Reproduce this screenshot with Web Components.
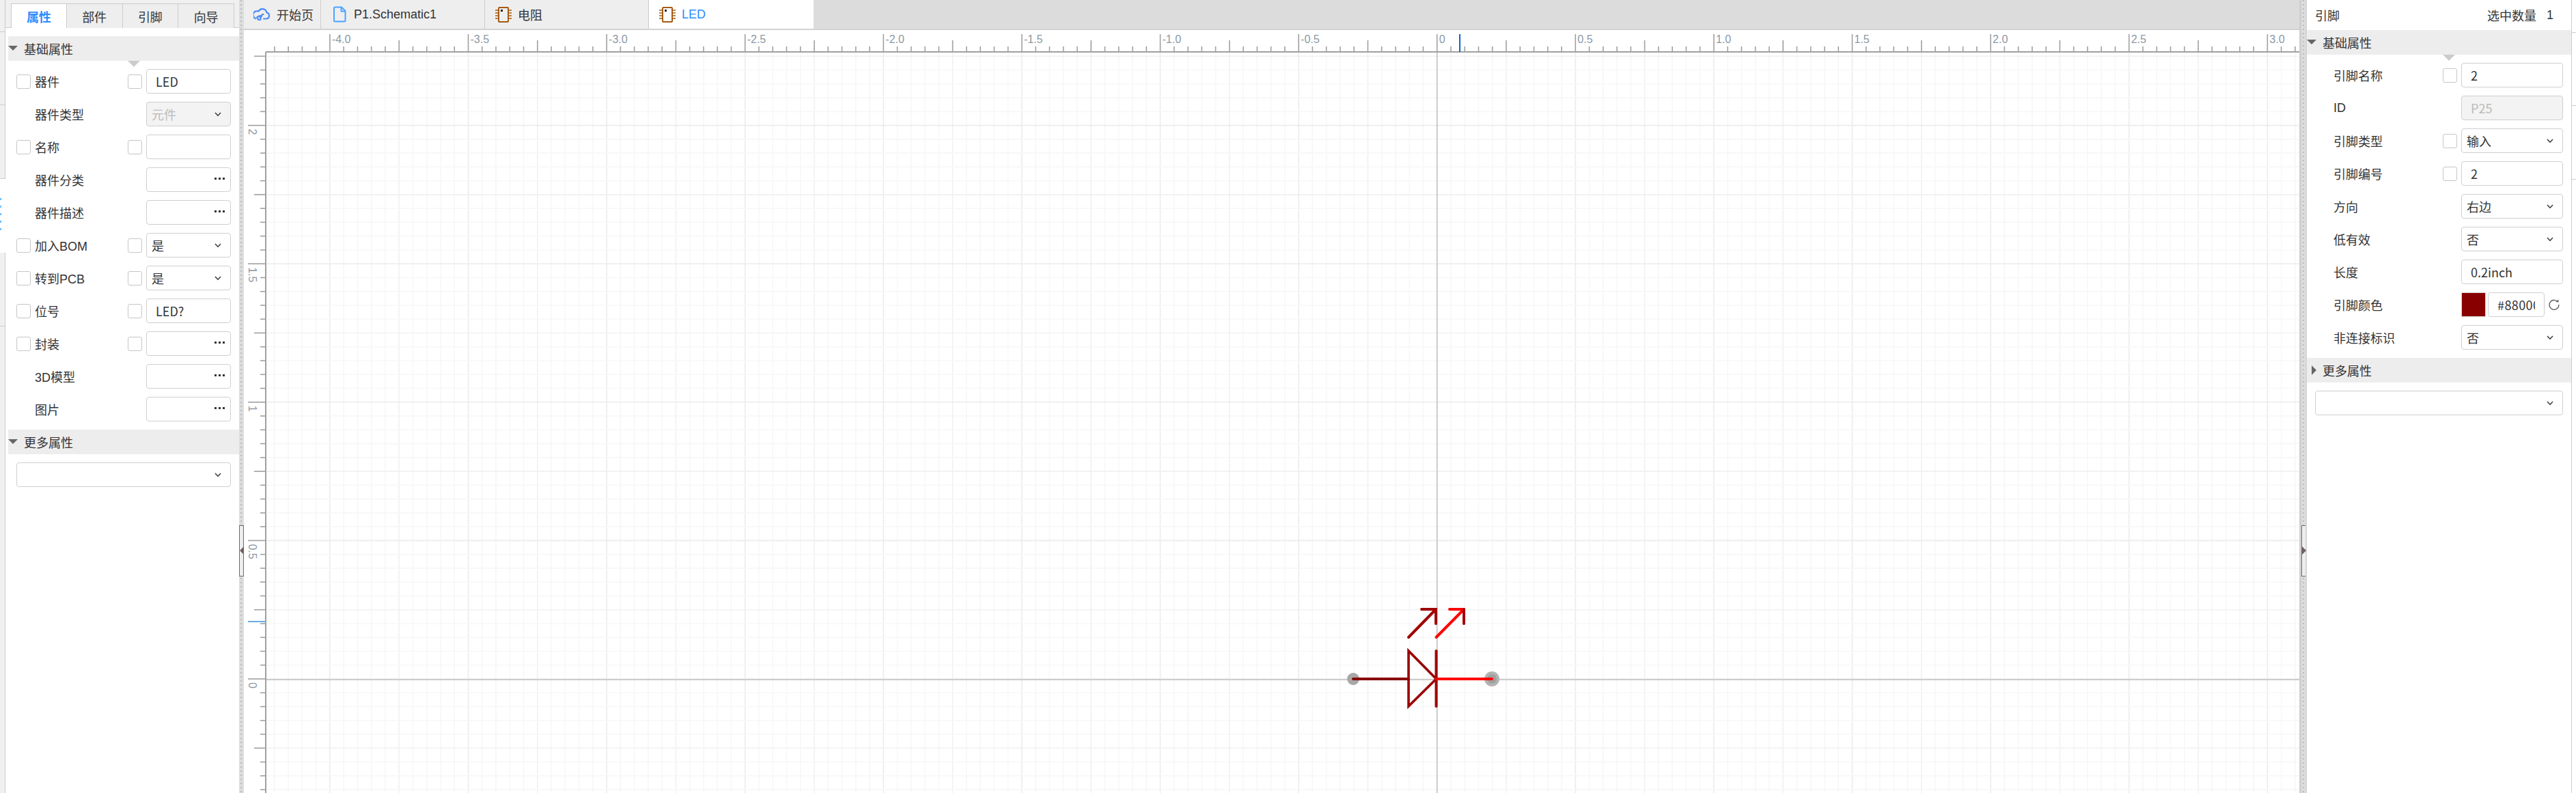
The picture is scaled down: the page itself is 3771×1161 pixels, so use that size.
<!DOCTYPE html>
<html lang="zh">
<head>
<meta charset="utf-8">
<title>LED</title>
<style>
  html, body { margin: 0; height: 100%; overflow: hidden; background: #fff; }
  body { font-family: "Liberation Sans", "Noto Sans CJK SC", sans-serif; font-size: 18px; color: #333; }
</style>
</head>
<body>
<editor-app>
  <edge-strip slot="left-edge"></edge-strip>
  <prop-panel slot="left" style="--panel-w:342px;--body-left:4px;--field-w:124px">
    <side-tabs slot="head">
      <side-tab active>属性</side-tab>
      <side-tab>部件</side-tab>
      <side-tab>引脚</side-tab>
      <side-tab>向导</side-tab>
    </side-tabs>
    <prop-section title="基础属性" open notch="175">
      <prop-row label="器件" check check2><prop-field type="input" value="LED"></prop-field></prop-row>
      <prop-row label="器件类型"><prop-field type="select" value="元件" disabled></prop-field></prop-row>
      <prop-row label="名称" check check2><prop-field type="input"></prop-field></prop-row>
      <prop-row label="器件分类"><prop-field type="dots"></prop-field></prop-row>
      <prop-row label="器件描述"><prop-field type="dots"></prop-field></prop-row>
      <prop-row label="加入BOM" check check2><prop-field type="select" value="是"></prop-field></prop-row>
      <prop-row label="转到PCB" check check2><prop-field type="select" value="是"></prop-field></prop-row>
      <prop-row label="位号" check check2><prop-field type="input" value="LED?"></prop-field></prop-row>
      <prop-row label="封装" check check2><prop-field type="dots"></prop-field></prop-row>
      <prop-row label="3D模型"><prop-field type="dots"></prop-field></prop-row>
      <prop-row label="图片"><prop-field type="dots"></prop-field></prop-row>
    </prop-section>
    <prop-section title="更多属性" open>
      <prop-row wide><prop-field type="select"></prop-field></prop-row>
    </prop-section>
  </prop-panel>
  <split-bar slot="left-split" dir="left"></split-bar>

  <doc-tabs slot="tabs">
    <doc-tab width="113" pad="14" gap="9" icon="cloud">开始页</doc-tab>
    <doc-tab width="240" pad="18" gap="11" icon="file">P1.Schematic1</doc-tab>
    <doc-tab width="240" pad="15" gap="9" icon="chip">电阻</doc-tab>
    <doc-tab width="241" pad="15" gap="9" icon="chip" active>LED</doc-tab>
  </doc-tabs>
  <sch-canvas slot="canvas"></sch-canvas>

  <split-bar slot="right-split" dir="right"></split-bar>
  <prop-panel slot="right" style="--panel-w:387px;--field-w:149px">
    <pin-head slot="head" name="引脚" count="1"></pin-head>
    <prop-section title="基础属性" open notch="199">
      <prop-row label="引脚名称" check2><prop-field type="input" value="2"></prop-field></prop-row>
      <prop-row label="ID"><prop-field type="input" value="P25" disabled></prop-field></prop-row>
      <prop-row label="引脚类型" check2><prop-field type="select" value="输入"></prop-field></prop-row>
      <prop-row label="引脚编号" check2><prop-field type="input" value="2"></prop-field></prop-row>
      <prop-row label="方向"><prop-field type="select" value="右边"></prop-field></prop-row>
      <prop-row label="低有效"><prop-field type="select" value="否"></prop-field></prop-row>
      <prop-row label="长度"><prop-field type="input" value="0.2inch"></prop-field></prop-row>
      <prop-row label="引脚颜色"><color-field value="#880000"></color-field></prop-row>
      <prop-row label="非连接标识"><prop-field type="select" value="否"></prop-field></prop-row>
    </prop-section>
    <prop-section title="更多属性">
      <prop-row wide><prop-field type="select"></prop-field></prop-row>
    </prop-section>
  </prop-panel>
  <edge-strip slot="right-edge" side="right"></edge-strip>
</editor-app>

<script>
const CJK = `"Noto Sans CJK SC", sans-serif`;
const chevron = `<svg width="10" height="7" viewBox="0 0 10 7"><path d="M1 1l4 4.2L9 1" fill="none" stroke="#333" stroke-width="1.4"/></svg>`;

class EditorApp extends HTMLElement {
  connectedCallback() {
    this.attachShadow({ mode: "open" }).innerHTML = `
      <style>
        :host { display: flex; width: 100%; height: 1161px; overflow: hidden; }
        .center { flex: 1; min-width: 0; display: flex; flex-direction: column; }
      </style>
      <slot name="left-edge"></slot>
      <slot name="left"></slot>
      <slot name="left-split"></slot>
      <div class="center">
        <slot name="tabs"></slot>
        <slot name="canvas"></slot>
      </div>
      <slot name="right-split"></slot>
      <slot name="right"></slot>
      <slot name="right-edge"></slot>
    `;
  }
}

class EdgeStrip extends HTMLElement {
  connectedCallback() {
    const right = this.getAttribute("side") === "right";
    this.attachShadow({ mode: "open" }).innerHTML = `
      <style>
        :host { display: flex; flex-direction: column; flex: none; width: ${right ? 7 : 8}px; height: 100%;
          box-sizing: border-box; ${right ? "border-left" : "border-right"}: 1px solid #ccc; background: ${right ? "#fff" : "#f0f0f0"}; }
        div { box-sizing: border-box; border-bottom: 1px solid #ccc; }
        .gap { background: #fff; border: 0; margin-right: -1px;
          background-image: repeating-linear-gradient(#6cbcff 0 3px, transparent 3px 11px);
          background-size: 2px 48px; background-repeat: no-repeat; background-position: 0 28px; }
      </style>
      <div style="height:${right ? 48 : 47}px"></div>
      <div style="height:107px"></div>
      <div style="height:108px"></div>
      ${right ? "" : `<div class="gap" style="height:108px"></div><div style="height:108px"></div>`}
    `;
  }
}

class PropPanel extends HTMLElement {
  connectedCallback() {
    this.attachShadow({ mode: "open" }).innerHTML = `
      <style>
        :host { display: flex; flex-direction: column; flex: none; width: var(--panel-w); height: 100%; background: #fff; }
        .body { padding-left: var(--body-left, 0); }
      </style>
      <slot name="head"></slot>
      <div class="body"><slot></slot></div>
    `;
  }
}

class SideTabs extends HTMLElement {
  connectedCallback() {
    this.attachShadow({ mode: "open" }).innerHTML = `
      <style>
        :host { display: flex; height: 41px; box-sizing: border-box; margin-bottom: 12px; padding: 5px 7px 0 8px; background: #f0f0f0; border-bottom: 1px solid #ccc; }
      </style>
      <slot></slot>
    `;
  }
}

class SideTab extends HTMLElement {
  connectedCallback() {
    this.attachShadow({ mode: "open" }).innerHTML = `
      <style>
        :host { display: flex; align-items: center; justify-content: center; width: 82px; height: 36px; box-sizing: border-box;
          background: #eee; border-top: 1px solid #ccc; border-right: 1px solid #ccc; color: #333; }
        :host([active]) { background: #fff; color: #2b8cff; font-weight: 700; border-left: 1px solid #ccc; }
      </style>
      <slot></slot>
    `;
  }
}

class PinHead extends HTMLElement {
  connectedCallback() {
    this.attachShadow({ mode: "open" }).innerHTML = `
      <style>
        :host { display: flex; align-items: center; height: 44px; padding: 0 26px 0 12px; }
        .name { flex: 1; }
        .count { margin-left: 15px; }
      </style>
      <span class="name">${this.getAttribute("name")}</span>
      <span>选中数量</span>
      <span class="count">${this.getAttribute("count")}</span>
    `;
  }
}

class PropSection extends HTMLElement {
  connectedCallback() {
    const notch = this.getAttribute("notch");
    this.attachShadow({ mode: "open" }).innerHTML = `
      <style>
        :host { display: block; position: relative; padding-bottom: 12px; }
        .head { display: flex; align-items: center; height: 36px; background: #ededed; padding-left: 23px; position: relative; }
        .arrow { position: absolute; left: 0; top: 14px; width: 0; height: 0;
          border-left: 7px solid transparent; border-right: 7px solid transparent; border-top: 7px solid #666; }
        :host(:not([open])) .arrow { left: 7px; top: 11px; border-top: 7px solid transparent; border-bottom: 7px solid transparent;
          border-left: 7px solid #666; border-right: 0; }
        .notch { position: absolute; top: 36px; left: ${notch}px; width: 0; height: 0;
          border-left: 9px solid transparent; border-right: 9px solid transparent; border-top: 9px solid #ccc; }
      </style>
      <div class="head"><i class="arrow"></i><span>${this.getAttribute("title")}</span></div>
      ${notch ? `<i class="notch"></i>` : ""}
      <slot></slot>
    `;
    this.removeAttribute("title");
  }
}

class CheckBox extends HTMLElement {
  connectedCallback() {
    this.attachShadow({ mode: "open" }).innerHTML = `
      <style>
        :host { display: block; width: 21px; height: 21px; box-sizing: border-box; border: 1px solid #c6c6c6; border-radius: 3px; background: #fff; }
      </style>
    `;
  }
}

class PropRow extends HTMLElement {
  connectedCallback() {
    const wide = this.hasAttribute("wide");
    this.attachShadow({ mode: "open" }).innerHTML = `
      <style>
        :host { display: block; margin-top: 12px; padding: 0 12px; }
        .row { display: grid; grid-template-columns: 21px 1fr 21px var(--field-w); column-gap: 6px; align-items: center; height: 36px; }
        .wide { grid-template-columns: 1fr; }
        .label { grid-column: 2; white-space: nowrap; }
        .c1 { grid-column: 1; }
        .c2 { grid-column: 3; }
        .field { grid-column: 4; }
        .wide .field { grid-column: 1; }
      </style>
      <div class="row ${wide ? "wide" : ""}">
        ${this.hasAttribute("check") ? `<check-box class="c1"></check-box>` : ""}
        ${wide ? "" : `<span class="label">${this.getAttribute("label")}</span>`}
        ${this.hasAttribute("check2") ? `<check-box class="c2"></check-box>` : ""}
        <div class="field"><slot></slot></div>
      </div>
    `;
  }
}

class PropField extends HTMLElement {
  connectedCallback() {
    const type = this.getAttribute("type");
    const value = this.getAttribute("value") || "";
    let tail = "";
    if (type === "select") tail = `<span class="chev">${chevron}</span>`;
    if (type === "dots") tail = `<span class="dots"><i></i><i></i><i></i></span>`;
    this.attachShadow({ mode: "open" }).innerHTML = `
      <style>
        :host { display: flex; align-items: center; height: 36px; box-sizing: border-box; border: 1px solid #cfcfcf; border-radius: 4px;
          background: #fff; padding: 0 13px 0 13px; font-family: ${CJK}; color: #333; }
        :host([type="select"]) { padding-left: 7px; }
        :host([disabled]) { background: #f3f3f3; color: #bbb; }
        .value { flex: 1; white-space: nowrap; overflow: hidden; }
        .chev { display: flex; }
        .dots { display: flex; gap: 3px; margin-bottom: 4px; margin-right: -5px; }
        .dots i { width: 3px; height: 3px; background: #333; }
      </style>
      <span class="value">${value}</span>${tail}
    `;
  }
}

class ColorField extends HTMLElement {
  connectedCallback() {
    const value = this.getAttribute("value");
    this.attachShadow({ mode: "open" }).innerHTML = `
      <style>
        :host { display: flex; align-items: center; height: 36px; font-family: ${CJK}; color: #333; }
        .swatch { width: 36px; height: 36px; box-sizing: border-box; border: 1px solid #d5d5d5; background: ${value}; flex: none; }
        .input { width: 83px; height: 36px; box-sizing: border-box; margin-left: 3px; padding: 0 13px; border: 1px solid #cfcfcf; border-radius: 4px;
          display: flex; align-items: center; flex: none; }
        .input span { overflow: hidden; white-space: nowrap; letter-spacing: .4px; }
        svg { margin-left: 6px; flex: none; }
      </style>
      <div class="swatch"></div>
      <div class="input"><span>${value}</span></div>
      <svg width="16" height="16" viewBox="0 0 16 16"><path d="M13.2 3.6A7 7 0 1 0 15 8" fill="none" stroke="#555" stroke-width="1.3"/><path d="M10.2 4.2h4.2V.4z" fill="#555"/></svg>
    `;
  }
}

class SplitBar extends HTMLElement {
  connectedCallback() {
    const left = this.getAttribute("dir") === "left";
    const tri = left
      ? "border-right: 6px solid #6f6060; border-left: 0; left: 0;"
      : "border-left: 6px solid #6f6060; border-right: 0; left: 0;";
    this.attachShadow({ mode: "open" }).innerHTML = `
      <style>
        :host { display: block; flex: none; position: relative; height: 100%; box-sizing: border-box; background-color: #ddd;
          width: ${left ? 7 : 11}px; ${left ? "" : "border-left: 3px solid #cfcfcf; border-right: 2px solid #d4d4d4;"}
          background-image: repeating-linear-gradient(#bbb 0 2px, transparent 2px 6px);
          background-size: 2px 100%; background-repeat: no-repeat; background-position: 2px 0; }
        .handle { position: absolute; top: 769px; left: 0; width: 6px; height: 75px; box-sizing: border-box;
          border: 1px solid #786868; border-right: 0; background: #eee; }
        .handle i { position: absolute; top: 30px; width: 0; height: 0; border-top: 6px solid transparent; border-bottom: 6px solid transparent; ${tri} }
        :host([dir="left"]) .handle { width: 7px; border-right: 1px solid #786868; }
      </style>
      <div class="handle"><i></i></div>
    `;
  }
}

class DocTabs extends HTMLElement {
  connectedCallback() {
    this.attachShadow({ mode: "open" }).innerHTML = `
      <style>
        :host { display: flex; flex: none; height: 44px; box-sizing: border-box; background: #dcdcdc; border-bottom: 2px solid #d2d2d2; }
      </style>
      <slot></slot>
    `;
  }
}

const tabIcons = {
  cloud: `<svg width="25" height="18" viewBox="0 0 25 18" fill="none" stroke="#4a8cf7" stroke-width="2.2" stroke-linecap="round" stroke-linejoin="round">
    <path d="M15 15.5h3.5a4.6 4.6 0 0 0 .8-9.1A6.2 6.2 0 0 0 7.6 4.6 5.3 5.3 0 0 0 3 15.2"/>
    <path d="M5 13.6c2-2.6 5-3 7-1.4M14.5 8.8c-2 .6-4 2.4-5 4.6a2.1 2.1 0 1 1-3 1.3"/></svg>`,
  file: `<svg width="19" height="24" viewBox="0 0 19 24" fill="none" stroke="#4aa3ff" stroke-width="2" stroke-linejoin="round">
    <path d="M2.5 1.5h9.5l5.5 5.5v14a1.5 1.5 0 0 1-1.5 1.5H2.5A1.5 1.5 0 0 1 1 21V3a1.500 1.500 0 0 1 1.5-1.5z"/><path d="M11.5 1.5V7.500h6"/></svg>`,
  chip: `<svg width="24" height="23" viewBox="0 0 24 23" fill="none" stroke="#a55a12" stroke-width="2">
    <rect x="5" y="1" width="14" height="21" rx="1"/>
    <path d="M0 5h5M0 9h5M0 13h5M0 17h5M19 5h5M19 9h5M19 13h5M19 17h5" stroke-width="1.6"/>
    <rect x="8" y="4" width="3" height="3" fill="#222" stroke="none"/></svg>`
};

class DocTab extends HTMLElement {
  connectedCallback() {
    this.attachShadow({ mode: "open" }).innerHTML = `
      <style>
        :host { display: flex; align-items: center; flex: none; box-sizing: border-box; height: 42px;
          width: ${this.getAttribute("width")}px; padding-left: ${this.getAttribute("pad")}px; gap: ${this.getAttribute("gap")}px;
          background: #eee; border-right: 1px solid #ccc; color: #333; }
        :host([active]) { background: #fff; color: #2b8cff; border-right: 0; }
        svg { flex: none; }
      </style>
      ${tabIcons[this.getAttribute("icon")]}
      <span><slot></slot></span>
    `;
  }
}

class SchCanvas extends HTMLElement {
  connectedCallback() {
    // all numbers below are page pixels, the viewBox moves them into this element
    const x0 = 2103.7, y0 = 994, step = 20.26, left = 389, top = 76, right = 3366, bottom = 1161;
    let grid = "", ticks = "", labels = "";
    const gridColor = (major, mid) => major ? "#ececec" : mid ? "#f1f1f1" : "#f7f7f7";

    for (let k = -90; k <= 62; k++) {
      const x = x0 + k * step;
      if (x <= left || x > right) continue;
      const major = k % 10 === 0, mid = k % 5 === 0;
      grid += `<line x1="${x}" y1="${top}" x2="${x}" y2="${bottom}" stroke="${gridColor(major, mid)}" stroke-width="1.6"/>`;
      const y1 = major ? 50 : mid ? 59 : 68;
      ticks += `<line x1="${x}" y1="${y1}" x2="${x}" y2="${top}"/>`;
      if (major) {
        const v = k / 20;
        const txt = k === 0 ? "0" : v.toFixed(1);
        labels += `<text x="${x + 3}" y="63">${txt}</text>`;
      }
    }
    for (let k = -8; k <= 45; k++) {
      const y = y0 - k * step;
      if (y <= top || y > bottom) continue;
      const major = k % 10 === 0, mid = k % 5 === 0;
      grid += `<line x1="${left}" y1="${y}" x2="${right}" y2="${y}" stroke="${gridColor(major, mid)}" stroke-width="1.6"/>`;
      const x1 = major ? 363 : mid ? 372 : 381;
      ticks += `<line x1="${x1}" y1="${y}" x2="${left}" y2="${y}"/>`;
      if (major && k >= 0) {
        labels += `<text transform="translate(364 ${y + 5}) rotate(90)">${k / 20}</text>`;
      }
    }

    this.attachShadow({ mode: "open" }).innerHTML = `
      <style>
        :host { display: block; flex: 1; min-height: 0; background: #fff; }
        svg { display: block; width: 100%; height: 100%; }
        text { font: 16px "Liberation Sans", sans-serif; fill: #8c98a4; }
      </style>
      <svg viewBox="357 44 3009 1117" preserveAspectRatio="none">
        ${grid}
        <line x1="${x0}" y1="${top}" x2="${x0}" y2="${bottom}" stroke="#cccccc" stroke-width="2"/>
        <line x1="${left}" y1="${y0 + 1}" x2="${right}" y2="${y0 + 1}" stroke="#cccccc" stroke-width="2"/>
        <g stroke="#a0a0a0" stroke-width="1.6">${ticks}</g>
        <line x1="${left}" y1="${top}" x2="${right}" y2="${top}" stroke="#a0a0a0" stroke-width="2"/>
        <line x1="${left}" y1="${top}" x2="${left}" y2="${bottom}" stroke="#a0a0a0" stroke-width="2"/>
        ${labels}
        <line x1="2137" y1="50" x2="2137" y2="76" stroke="#0a66cc" stroke-width="2"/>
        <line x1="363" y1="910" x2="389" y2="910" stroke="#6aaae4" stroke-width="2"/>

        <circle cx="1981" cy="994" r="9" fill="#a8a8a8"/>
        <circle cx="2184" cy="994" r="11" fill="#b4b4b4"/>
        <circle cx="2184" cy="994" r="7" fill="#a0a0a0"/>
        <g fill="none" stroke-linecap="round" stroke-linejoin="miter" stroke-width="4">
          <path d="M1981 994H2062" stroke="#880000"/>
          <path d="M2062 953V1034L2102.500 994Z" stroke="#990000" stroke-width="3.600"/>
          <path d="M2102.500 953V1034" stroke="#a00000"/>
          <path d="M2102.500 994H2184" stroke="#ff0000"/>
          <path d="M2062 933L2102 892M2081 892H2102V913" stroke="#a00000"/>
          <path d="M2102.500 933L2143 892M2122 892H2143" stroke="#ff0000"/>
          <path d="M2143 892V913" stroke="#a00000"/>
        </g>
      </svg>
    `;
  }
}

customElements.define("editor-app", EditorApp);
customElements.define("edge-strip", EdgeStrip);
customElements.define("prop-panel", PropPanel);
customElements.define("side-tabs", SideTabs);
customElements.define("side-tab", SideTab);
customElements.define("pin-head", PinHead);
customElements.define("prop-section", PropSection);
customElements.define("check-box", CheckBox);
customElements.define("prop-row", PropRow);
customElements.define("prop-field", PropField);
customElements.define("color-field", ColorField);
customElements.define("split-bar", SplitBar);
customElements.define("doc-tabs", DocTabs);
customElements.define("doc-tab", DocTab);
customElements.define("sch-canvas", SchCanvas);
</script>
</body>
</html>
